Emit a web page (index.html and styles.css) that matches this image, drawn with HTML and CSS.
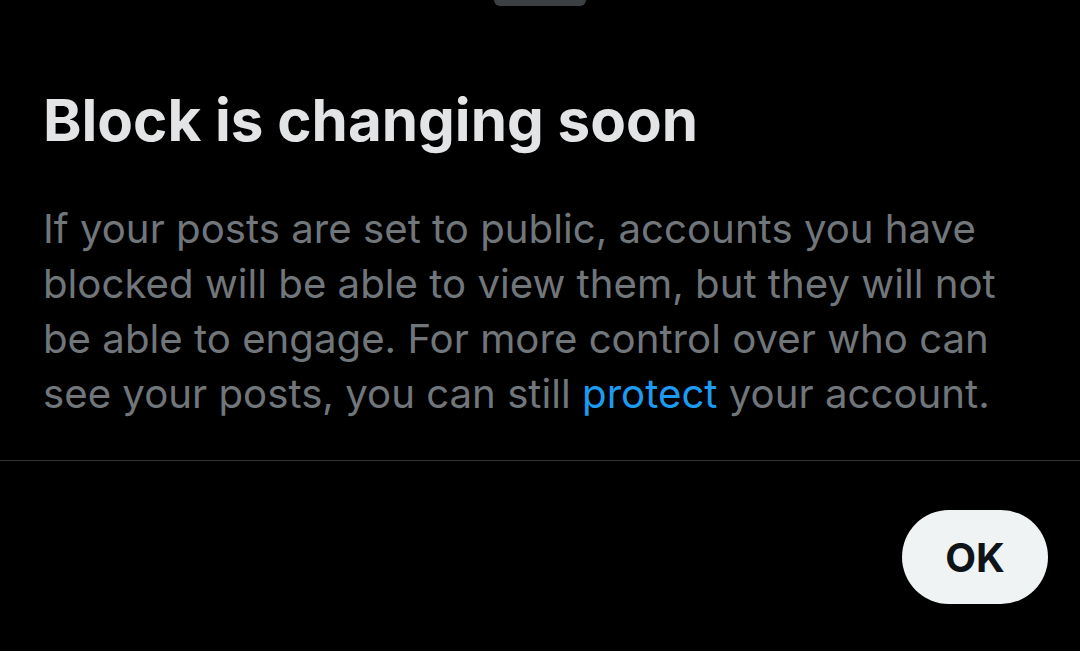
FILE: index.html
```html
<!DOCTYPE html>
<html>
<head>
<meta charset="utf-8">
<link rel="stylesheet" href="styles.css">
</head>
<body>
<div class="sheet">
  <div class="handle-row"><div class="handle"></div></div>
  <div class="content">
    <h1 class="title">Block is changing soon</h1>
    <p class="body">If your posts are set to public, accounts you have blocked will be able to view them, but they will not be able to engage. For more control over who can see your posts, you can still <span class="link">protect</span> your account.</p>
  </div>
  <div class="divider"></div>
  <div class="actions">
    <button class="ok">OK</button>
  </div>
</div>
</body>
</html>
```
FILE: styles.css
```css
html, body {
  margin: 0;
  padding: 0;
  background: #000;
  width: 1080px;
  height: 651px;
  overflow: hidden;
}
.sheet {
  display: flex;
  flex-direction: column;
  font-family: Inter, "Noto Sans", sans-serif;
}
.handle-row {
  display: flex;
  justify-content: center;
}
.handle {
  width: 92px;
  height: 6px;
  background: #3d4043;
  border-radius: 0 0 6px 6px;
}
.content {
  padding: 0 43px;
}
.title {
  margin: 78px 0 0;
  font-size: 58.3px;
  font-weight: 700;
  color: #e2e4e5;
  line-height: 72px;
}
.body {
  margin: 45px 0 0;
  font-size: 40.2px;
  line-height: 55px;
  color: #71767b;
}
.link {
  color: #1d9bf0;
}
.divider {
  margin-top: 39px;
  height: 1px;
  background: #2f3336;
}
.actions {
  display: flex;
  justify-content: flex-end;
  padding: 49px 32px 0 0;
}
.ok {
  width: 146px;
  height: 94px;
  border: none;
  border-radius: 47px;
  background: #eff3f4;
  color: #0f1419;
  font-family: Inter, "Noto Sans", sans-serif;
  font-size: 40px;
  font-weight: 700;
  padding: 0;
}
```
